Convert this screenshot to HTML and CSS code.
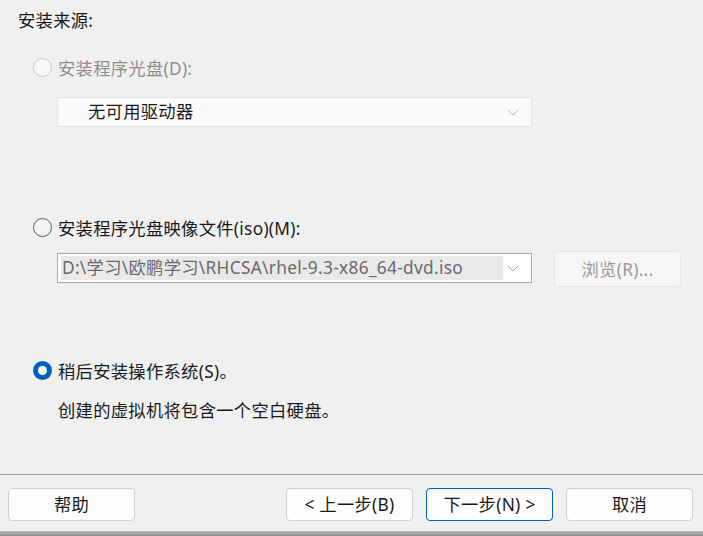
FILE: index.html
```html
<!DOCTYPE html>
<html lang="zh-CN">
<head>
    <meta charset="UTF-8">
    <title>新建虚拟机向导 - 安装来源</title>
    <link rel="stylesheet" href="styles.css">
</head>
<body>
    <div class="dialog">
        <div class="content">
            <div class="title">安装来源:</div>

            <label class="radio-row disabled">
                <span class="radio"></span>
                <span class="radio-label">安装程序光盘(D):</span>
            </label>
            <div class="combo combo-disabled">
                <span class="combo-text">无可用驱动器</span>
                <svg class="chevron" width="12" height="7" viewBox="0 0 12 7"><path d="M1 1 L6 6 L11 1" fill="none" stroke="#b4b4b4" stroke-width="1"/></svg>
            </div>

            <label class="radio-row radio-row-iso">
                <span class="radio"></span>
                <span class="radio-label">安装程序光盘映像文件(iso)(M):</span>
            </label>
            <div class="iso-row">
                <div class="combo combo-iso">
                    <span class="combo-text">D:\学习\欧鹏学习\RHCSA\rhel-9.3-x86_64-dvd.iso</span>
                    <svg class="chevron" width="12" height="7" viewBox="0 0 12 7"><path d="M1 1 L6 6 L11 1" fill="none" stroke="#a8a8a8" stroke-width="1"/></svg>
                </div>
                <button class="btn btn-browse" disabled>浏览(R)...</button>
            </div>

            <label class="radio-row radio-row-later">
                <span class="radio checked"></span>
                <span class="radio-label">稍后安装操作系统(S)。</span>
            </label>
            <div class="note">创建的虚拟机将包含一个空白硬盘。</div>
        </div>

        <div class="footer">
            <button class="btn">帮助</button>
            <div class="nav">
                <button class="btn">&lt; 上一步(B)</button>
                <button class="btn btn-default">下一步(N) &gt;</button>
                <button class="btn">取消</button>
            </div>
        </div>
    </div>
    <div class="window-edge"></div>
</body>
</html>
```

FILE: styles.css
```css
:root {
    --bg: #f0f0f0;
    --text: #1a1a1a;
    --muted: #8f8f8f;
    --accent: #005fb8;
}

* {
    box-sizing: border-box;
    margin: 0;
    padding: 0;
}

body {
    font-family: "Noto Sans", "Noto Sans CJK SC", sans-serif;
    font-size: 17.3px;
    letter-spacing: 0.3px;
    color: var(--text);
    background: var(--bg);
    width: 703px;
    height: 536px;
    overflow: hidden;
}

.dialog {
    height: 531px;
    display: flex;
    flex-direction: column;
    background: var(--bg);
    border-radius: 0 0 8px 8px;
}

.content {
    flex: 1;
    padding: 8px 0 0 18px;
}

.title {
    height: 26px;
    line-height: 26px;
}

.radio-row {
    display: flex;
    align-items: center;
    height: 24px;
    margin-top: 21px;
    margin-left: 15px;
    gap: 6px;
}

.radio {
    width: 19px;
    height: 19px;
    border-radius: 50%;
    border: 1px solid #5f5f5f;
    background: #f3f3f3;
    flex-shrink: 0;
    position: relative;
}

.radio.checked {
    border: none;
    background: var(--accent);
}

.radio.checked::after {
    content: '';
    position: absolute;
    left: 5px;
    top: 5px;
    width: 9px;
    height: 9px;
    border-radius: 50%;
    background: #fff;
}

.disabled .radio {
    border-color: #c8c8c8;
    background: #f7f7f7;
}

.disabled .radio-label {
    color: var(--muted);
}

.combo {
    display: flex;
    align-items: center;
    justify-content: space-between;
    width: 475px;
    height: 30px;
    margin-left: 39px;
    border: 1px solid #e4e4e4;
    background: #fafafa;
}

.combo-disabled {
    margin-top: 18px;
    padding: 0 12px 3px 30px;
}

.combo-disabled .chevron {
    margin-top: 3px;
}

.combo-iso {
    margin-left: 0;
    background: #fff;
    border-color: #a9a9a9;
    padding: 2px 12px 2px 3px;
    margin-top: 2px;
}

.combo-iso .combo-text {
    background: #e9e9e9;
    color: #6a6a6a;
    height: 24px;
    line-height: 24px;
    width: 442px;
    padding-left: 1px;
    white-space: nowrap;
}

.radio-row-iso {
    margin-top: 88px;
}

.iso-row {
    display: flex;
    align-items: flex-start;
    margin-top: 12px;
    margin-left: 39px;
    gap: 22px;
}

.btn {
    font-family: inherit;
    font-size: 17.3px;
    letter-spacing: 0.3px;
    color: var(--text);
    width: 127px;
    height: 33px;
    background: #fdfdfd;
    border: 1px solid #d0d0d0;
    border-radius: 4px;
    padding-bottom: 2px;
}

.btn-browse {
    height: 36px;
    color: #9a9a9a;
    background: #f6f6f6;
    border-color: #e6e6e6;
}

.radio-row-later {
    margin-top: 71px;
}

.note {
    margin: 17px 0 0 40px;
    height: 24px;
    line-height: 24px;
}

.footer {
    display: flex;
    justify-content: space-between;
    border-top: 1px solid #a3a3a3;
    padding: 13px 10px 10px 8px;
    height: 57px;
}

.nav {
    display: flex;
    gap: 13px;
}

.btn-default {
    border-color: var(--accent);
}

.window-edge {
    height: 5px;
    background: linear-gradient(#b9b9b9, #8c8c8c);
}
```
